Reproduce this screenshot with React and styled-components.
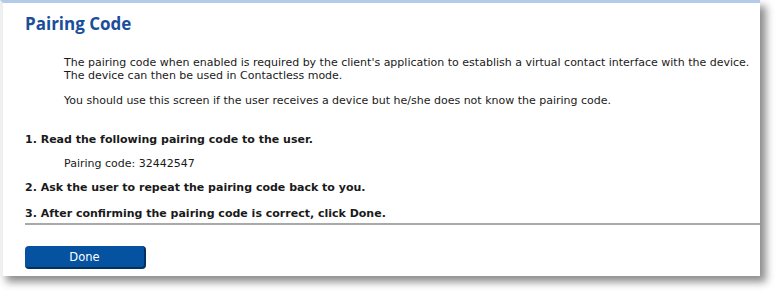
import React from 'react'
import styled, { createGlobalStyle } from 'styled-components'

const GlobalStyle = createGlobalStyle`
    body {
        margin: 0;
        background: #ffffff;
    }`

const Page = styled.div`
    width: 776px;
    height: 292px;
    background: #ffffff;`

const Panel = styled.div`
    width: 760px;
    height: 276px;
    box-sizing: border-box;
    background: #ffffff;
    border-top: 3px solid #b3cbe9;
    border-left: 3px solid #efefef;
    box-shadow: 6px 6px 8px rgba(0, 0, 0, 0.45);
    padding: 10px 0 0 22px;
    font-family: "DejaVu Sans", Verdana, sans-serif;
    font-size: 11px;
    color: #1a1a1a;
    display: flex;
    flex-direction: column;
    align-items: stretch;`

const Title = styled.h1`
    margin: 0;
    font-family: "Open Sans", sans-serif;
    font-size: 17px;
    font-weight: 700;
    color: #1a4e9c;
    line-height: 21px;`

const Intro = styled.div`
    padding: 22px 0 0 39px;
    display: flex;
    flex-direction: column;
    gap: 12px;`

const Para = styled.p`
    margin: 0;
    line-height: 13px;
    white-space: nowrap;`

const Step = styled.div`
    font-weight: 700;
    line-height: 14px;
    white-space: nowrap;
    margin-top: ${p => p.gap || 12}px;`

const Code = styled.div`
    padding-left: 39px;
    margin-top: 10px;
    line-height: 13px;`

const Rule = styled.hr`
    width: 100%;
    margin: 2px 0 0;
    border: none;
    border-top: 2px solid #a9a9a9;`

const Button = styled.button`
    align-self: flex-start;
    margin-top: 21px;
    width: 121px;
    height: 23px;
    padding: 0;
    background: #0552a0;
    color: #ffffff;
    font-family: "DejaVu Sans", Verdana, sans-serif;
    font-size: 11.5px;
    border: none;
    border-right: 2px solid #02305f;
    border-bottom: 2px solid #02305f;
    border-radius: 4px;
    cursor: pointer;`

function App() {
  return (
    <Page>
      <GlobalStyle />
      <Panel>
        <Title>Pairing Code</Title>
        <Intro>
          <Para>
            The pairing code when enabled is required by the client's application to establish a virtual contact interface with the device.<br />
            The device can then be used in Contactless mode.
          </Para>
          <Para>You should use this screen if the user receives a device but he/she does not know the pairing code.</Para>
        </Intro>
        <Step gap={26}>1. Read the following pairing code to the user.</Step>
        <Code>Pairing code: 32442547</Code>
        <Step gap={11}>2. Ask the user to repeat the pairing code back to you.</Step>
        <Step>3. After confirming the pairing code is correct, click Done.</Step>
        <Rule />
        <Button>Done</Button>
      </Panel>
    </Page>
  )
}

export default App
